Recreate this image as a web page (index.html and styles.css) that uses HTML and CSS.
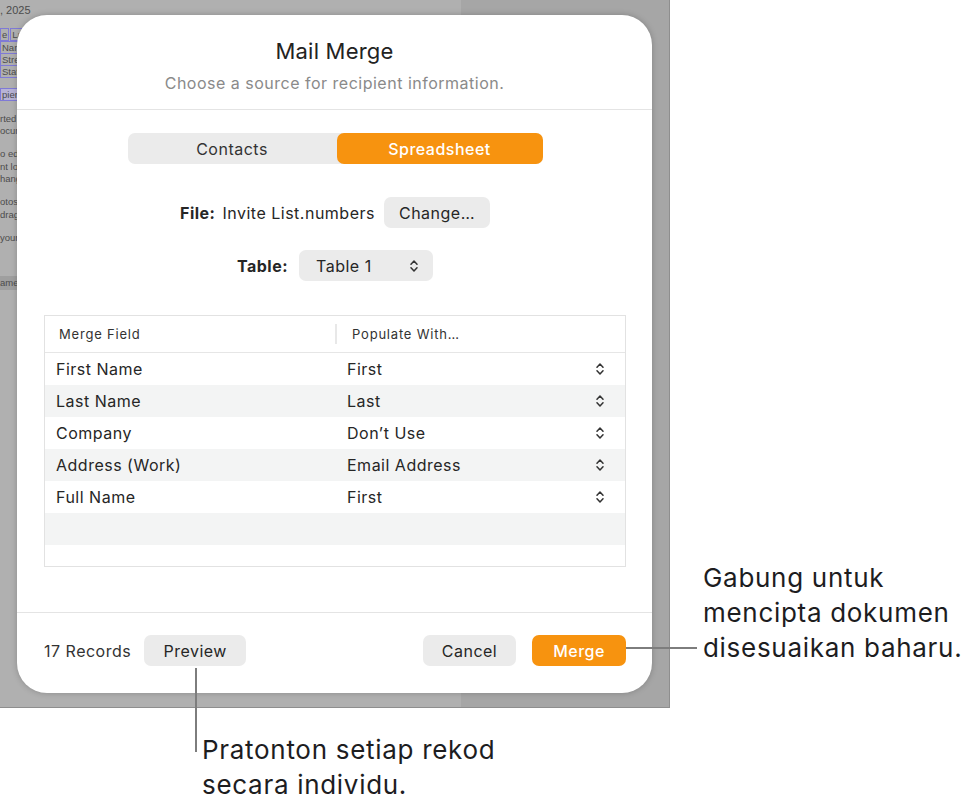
FILE: index.html
```html
<!DOCTYPE html>
<html lang="ms">
<head>
  <meta charset="UTF-8">
  <meta name="viewport" content="width=device-width, initial-scale=1.0">
  <title>Mail Merge</title>
  <link rel="stylesheet" href="styles.css">
</head>
<body>
  <div class="screen">
    <div class="doc">
      <div class="doc-line date">, 2025</div>
      <div class="doc-line fields"><span class="fld">e</span><span class="fld">Last Name</span></div>
      <div class="doc-line fields"><span class="fld">Name</span></div>
      <div class="doc-line fields"><span class="fld">Street</span></div>
      <div class="doc-line fields"><span class="fld">State</span></div>
      <div class="doc-line fields gap"><span class="fld fill">pient</span></div>
      <div class="doc-line gap">rted into</div>
      <div class="doc-line">ocument</div>
      <div class="doc-line gap">o edit</div>
      <div class="doc-line">nt look</div>
      <div class="doc-line">hange</div>
      <div class="doc-line gap">otos</div>
      <div class="doc-line">drag</div>
      <div class="doc-line gap">your</div>
      <div class="doc-line band">ame</div>
    </div>

    <div class="dialog">
      <div class="dialog-head">
        <h1>Mail Merge</h1>
        <p>Choose a source for recipient information.</p>
      </div>

      <div class="dialog-body">
        <div class="segmented">
          <button class="seg">Contacts</button>
          <button class="seg active">Spreadsheet</button>
        </div>

        <div class="form-row file-row">
          <span class="lbl">File:</span>
          <span class="val">Invite List.numbers</span>
          <button class="btn">Change…</button>
        </div>

        <div class="form-row table-row">
          <span class="lbl">Table:</span>
          <button class="btn popup">Table 1
            <svg class="chev" viewBox="0 0 8 14"><path d="M1 5.2 4 2l3 3.2M1 8.8 4 12l3-3.2"/></svg>
          </button>
        </div>

        <div class="grid">
          <div class="grid-head">
            <div class="col">Merge Field</div>
            <div class="col second">Populate With…</div>
          </div>
          <div class="grid-row">
            <div class="col">First Name</div>
            <div class="col pick">First<svg class="chev" viewBox="0 0 8 14"><path d="M1 5.2 4 2l3 3.2M1 8.8 4 12l3-3.2"/></svg></div>
          </div>
          <div class="grid-row">
            <div class="col">Last Name</div>
            <div class="col pick">Last<svg class="chev" viewBox="0 0 8 14"><path d="M1 5.2 4 2l3 3.2M1 8.8 4 12l3-3.2"/></svg></div>
          </div>
          <div class="grid-row">
            <div class="col">Company</div>
            <div class="col pick">Don’t Use<svg class="chev" viewBox="0 0 8 14"><path d="M1 5.2 4 2l3 3.2M1 8.8 4 12l3-3.2"/></svg></div>
          </div>
          <div class="grid-row">
            <div class="col">Address (Work)</div>
            <div class="col pick">Email Address<svg class="chev" viewBox="0 0 8 14"><path d="M1 5.2 4 2l3 3.2M1 8.8 4 12l3-3.2"/></svg></div>
          </div>
          <div class="grid-row">
            <div class="col">Full Name</div>
            <div class="col pick">First<svg class="chev" viewBox="0 0 8 14"><path d="M1 5.2 4 2l3 3.2M1 8.8 4 12l3-3.2"/></svg></div>
          </div>
          <div class="grid-row empty"></div>
        </div>
      </div>

      <div class="dialog-foot">
        <span class="count">17 Records</span>
        <button class="btn" id="preview">Preview</button>
        <span class="spacer"></span>
        <button class="btn">Cancel</button>
        <button class="btn primary">Merge</button>
      </div>
    </div>
  </div>

  <!-- callouts -->
  <div class="callout merge-note">
    <span class="lead"></span>
    <p>Gabung untuk<br>mencipta dokumen<br>disesuaikan baharu.</p>
  </div>
  <div class="callout preview-note">
    <span class="lead"></span>
    <p>Pratonton setiap rekod<br>secara individu.</p>
  </div>
</body>
</html>
```

FILE: styles.css
```css
body {
  margin: 0;
  width: 977px; height: 806px;
  background: #fff;
  font-family: Inter, "Noto Sans", sans-serif;
  color: #262626;
  letter-spacing: 0.5px;
  position: relative;
  overflow: hidden;
}
button { font-family: inherit; letter-spacing: inherit; }

.screen {
  position: relative;
  width: 669px; height: 707px;
  border-right: 1px solid #8e8e8e;
  border-bottom: 1px solid #8e8e8e;
  background: linear-gradient(to right, #b0b0b0 0, #b0b0b0 461px, #a6a6a6 461px);
  overflow: hidden;
}

/* document behind the sheet */
.doc {
  width: 461px;
  padding-top: 3px;
  font-size: 9.5px;
  letter-spacing: 0;
  color: #4c4c4c;
  font-family: "Liberation Sans", sans-serif;
}
.doc-line { height: 12.3px; line-height: 12px; white-space: nowrap; }
.doc-line.date { margin: 0 0 14px; font-size: 11px; line-height: 14px; }
.doc-line.gap { margin-top: 11px; }
.fld { border: 1px solid #7f7ad6; padding: 0 1px; margin-right: 1px; }
.fld.fill { background: #b7b3d6; }
.doc-line.band { margin-top: 32px; background: #9f9f9f; height: 14px; line-height: 14px; }

/* sheet */
.dialog {
  position: absolute;
  left: 17px; top: 15px;
  width: 635px; height: 678px;
  background: #fff;
  border-radius: 30px;
  box-shadow: 0 0 6px rgba(0,0,0,0.22);
  display: flex; flex-direction: column;
  overflow: hidden;
}
.dialog-head {
  height: 95px;
  border-bottom: 1px solid #e4e4e4;
  text-align: center;
  padding-top: 22px;
  box-sizing: border-box;
}
.dialog-head h1 { margin: 0; font-size: 22px; line-height: 28px; font-weight: 400; color: #222; letter-spacing: 0.2px; }
.dialog-head p { margin: 8px 0 0; font-size: 16px; line-height: 20px; color: #8a8a8a; }

.dialog-body { flex: 1; padding: 23px 26px 0 27px; display: flex; flex-direction: column; align-items: center; }

.segmented {
  display: flex;
  width: 415px; height: 31px;
  background: #ebebeb;
  border-radius: 7px;
}
.seg {
  flex: 1;
  border: none; background: none;
  font-size: 16px; color: #333;
  border-radius: 7px;
  padding: 0;
}
.seg.active { background: #f7930f; color: #fff; font-weight: 500; flex: 0 0 206px; }

.form-row { display: flex; align-items: center; }
.file-row { margin-top: 33px; }
.table-row { margin-top: 22px; }
.lbl { font-weight: 700; font-size: 16px; color: #262626; }
.val { font-size: 16px; margin-left: 7px; margin-right: 9px; color: #262626; }

.btn {
  height: 31px;
  border: none; border-radius: 7px;
  background: #ebebeb;
  font-size: 16px; color: #262626;
  padding: 0 15px;
}
.btn.popup {
  margin-left: 11px;
  width: 134px;
  display: flex; align-items: center; justify-content: space-between;
  padding: 0 15px 0 17px;
}
.chev { width: 8px; height: 14px; fill: none; stroke: #333; stroke-width: 1.5; stroke-linecap: round; stroke-linejoin: round; }

/* field table */
.grid {
  align-self: stretch;
  margin-top: 34px;
  height: 252px;
  box-sizing: border-box;
  border: 1px solid #e2e2e2;
  overflow: hidden;
}
.grid-head, .grid-row { display: grid; grid-template-columns: 290px 1fr; }
.grid-head {
  height: 36px;
  border-bottom: 1px solid #e6e6e6;
  font-size: 13px; color: #333;
  letter-spacing: 0.8px;
  align-items: center;
}
.grid-head .col { padding-left: 14px; }
.grid-head .col.second { border-left: 2px solid #e8e8e8; height: 20px; line-height: 20px; padding-left: 15px; }
.grid-row { height: 32px; align-items: center; font-size: 16px; color: #262626; }
.grid-row:nth-child(odd) { background: #f3f4f4; }
.grid-row .col { padding-left: 11px; }
.grid-row .pick { display: flex; justify-content: space-between; align-items: center; padding-left: 12px; padding-right: 21px; }

/* footer */
.dialog-foot {
  height: 81px;
  border-top: 1px solid #e4e4e4;
  box-sizing: border-box;
  display: flex; align-items: center;
  padding: 0 26px 5px 27px;
}
.count { font-size: 16px; color: #333; margin-right: 13px; }
#preview { width: 102px; }
.spacer { flex: 1; }
.dialog-foot .btn:nth-last-child(2) { width: 93px; margin-right: 16px; }
.btn.primary { background: #f7930f; color: #fff; font-weight: 500; width: 94px; }

/* callouts */
.callout { position: absolute; color: #1d1d1f; font-size: 26px; line-height: 35px; letter-spacing: 0.7px; }
.callout p { margin: 0; }
.merge-note { left: 626px; top: 560px; display: flex; align-items: flex-end; }
.merge-note .lead { width: 71px; height: 2px; background: #7d7d7d; margin-right: 6px; margin-bottom: 16px; }
.preview-note { left: 195px; top: 668px; display: flex; align-items: flex-start; }
.preview-note .lead { width: 2px; height: 84px; background: #7d7d7d; margin-right: 5px; }
.preview-note p { margin-top: 64px; }
```
